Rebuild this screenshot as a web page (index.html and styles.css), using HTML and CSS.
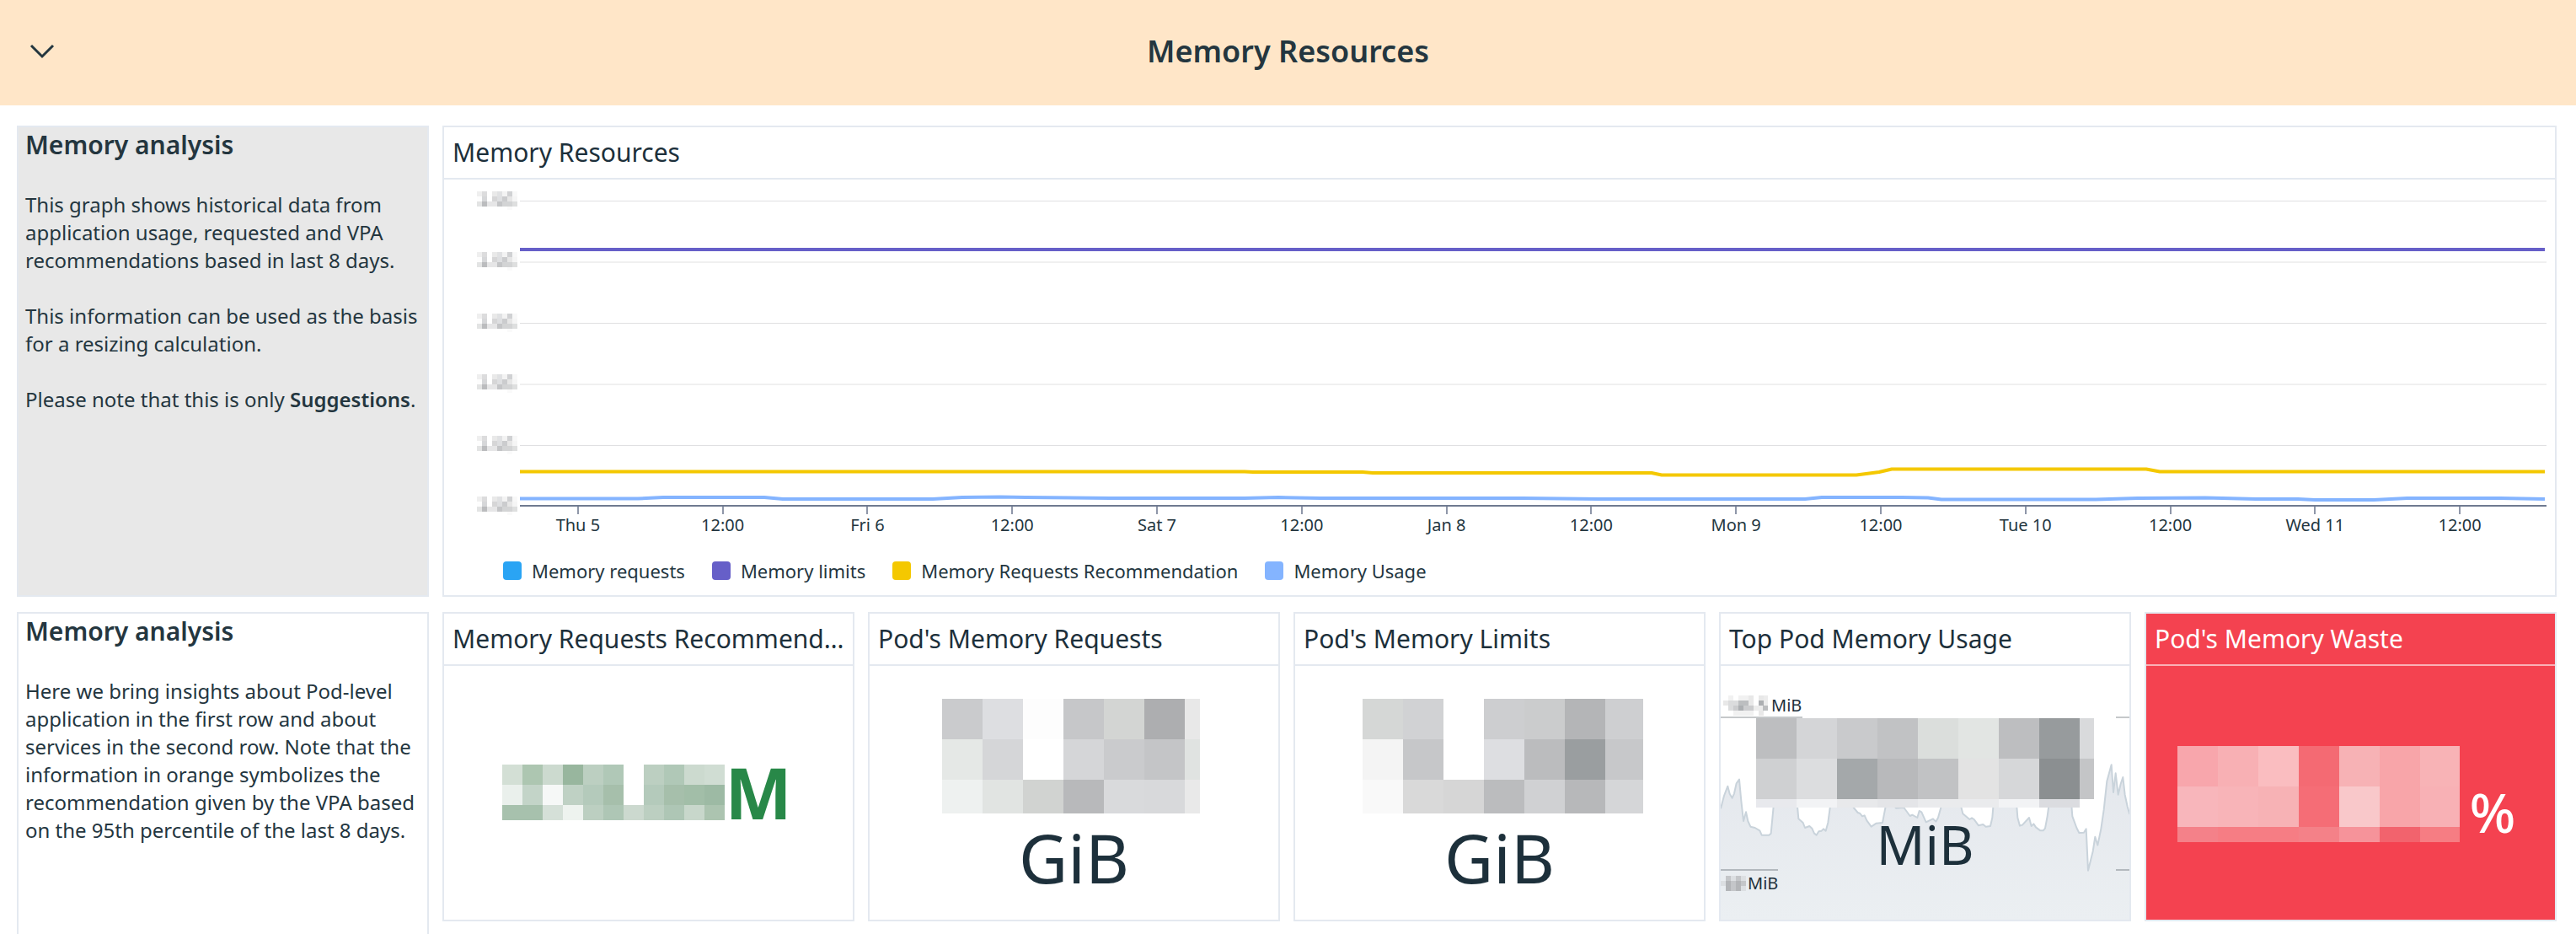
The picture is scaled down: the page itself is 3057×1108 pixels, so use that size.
FILE: index.html
```html
<!DOCTYPE html>
<html lang="en">
<head>
<meta charset="utf-8">
<title>Memory Resources</title>
<link rel="stylesheet" href="styles.css">
</head>
<body>
<svg class="defs" aria-hidden="true">
  <symbol id="tick-value" viewBox="0 0 48 22">
    <g shape-rendering="crispEdges">
      <path fill="#efefef" d="M0 0h6v6h-6z"/><path fill="#dcdcdd" d="M6 0h6v6h-6z"/><path fill="#e9e9e9" d="M18 0h6v6h-6z"/><path fill="#e0e1e3" d="M24 0h6v6h-6z"/><path fill="#f3f3f3" d="M30 0h6v6h-6z"/><path fill="#d0d1d3" d="M36 0h6v6h-6z"/><path fill="#f8f8f8" d="M42 0h6v6h-6z"/>
      <path fill="#fdfdfd" d="M0 6h6v6h-6z"/><path fill="#d6d7d9" d="M6 6h6v6h-6z"/><path fill="#d6d6d7" d="M18 6h6v6h-6z"/><path fill="#dedfe1" d="M24 6h6v6h-6z"/><path fill="#cbccce" d="M30 6h6v6h-6z"/><path fill="#e6e6e6" d="M36 6h6v6h-6z"/><path fill="#f5f5f5" d="M42 6h6v6h-6z"/>
      <path fill="#e3e4e4" d="M0 12h6v6h-6z"/><path fill="#bbbcbe" d="M6 12h6v6h-6z"/><path fill="#e6e6e7" d="M12 12h12v6h-12z"/><path fill="#c4c5c7" d="M24 12h6v6h-6z"/><path fill="#d3d4d5" d="M30 12h12v6h-12z"/><path fill="#dedfdf" d="M42 12h6v6h-6z"/>
      <path fill="#fafafa" d="M36 18h6v4h-6z"/>
    </g>
  </symbol>
</svg>

<header class="group-header">
  <button class="toggle" type="button" aria-label="Collapse group">
    <svg width="30" height="18" viewBox="0 0 30 18" fill="none" stroke="#24363f" stroke-width="3"><path d="M2 2l13 13L28 2"/></svg>
  </button>
  <h1>Memory Resources</h1>
</header>

<main class="board">
  <section class="card note note-grey">
    <h2>Memory analysis</h2>
    <p>This graph shows historical data from application usage, requested and VPA recommendations based in last 8 days.</p>
    <p>This information can be used as the basis for a resizing calculation.</p>
    <p>Please note that this is only <strong>Suggestions</strong>.</p>
  </section>

  <section class="card graph">
    <h3>Memory Resources</h3>
    <div class="chart">
      <div class="y-axis">
        <svg><use href="#tick-value"/></svg>
        <svg><use href="#tick-value"/></svg>
        <svg><use href="#tick-value"/></svg>
        <svg><use href="#tick-value"/></svg>
        <svg><use href="#tick-value"/></svg>
        <svg><use href="#tick-value"/></svg>
      </div>
      <div class="plot">
        <svg class="lines" viewBox="0 0 2405 388" preserveAspectRatio="none" fill="none">
          <g shape-rendering="crispEdges">
            <path fill="#e0e0e2" d="M0 25h2405v1H0zM0 170h2405v1H0zM0 315h2405v1H0z"/>
            <path fill="#f0f0f0" d="M0 97h2405v2H0zM0 242h2405v2H0z"/>
            <path fill="#6f7a90" d="M0 386h2405v2H0z"/>
          </g>
          <g stroke-width="4" stroke-linejoin="round">
            <path stroke="#84b4ff" d="M0 378.500H140L170 377H290L312 379H490L525 377L570 376.500L600 377L700 378H860L900 377L950 378H1110L1190 378L1280 379H1525L1545 377L1640 377L1671 377.500L1687 379.500H1870L1920 378L2000 377.500L2060 379H2110L2130 380H2200L2240 378H2350L2403 379"/>
            <path stroke="#f4c800" d="M0 346.500H860L870 347H1000L1012 348H1343L1355 350.500H1586L1613 347L1628 343.500H1930L1946 346.500H2403"/>
            <path stroke="#665fc8" d="M0 83H2403"/>
          </g>
        </svg>
        <ol class="x-axis">
          <li>Thu 5</li><li>12:00</li><li>Fri 6</li><li>12:00</li><li>Sat 7</li><li>12:00</li><li>Jan 8</li><li>12:00</li><li>Mon 9</li><li>12:00</li><li>Tue 10</li><li>12:00</li><li>Wed 11</li><li>12:00</li>
        </ol>
      </div>
    </div>
    <ul class="legend">
      <li class="requests">Memory requests</li>
      <li class="limits">Memory limits</li>
      <li class="recommendation">Memory Requests Recommendation</li>
      <li class="usage">Memory Usage</li>
    </ul>
  </section>

  <section class="card note note-tall">
    <h2>Memory analysis</h2>
    <p>Here we bring insights about Pod-level application in the first row and about services in the second row. Note that the information in orange symbolizes the recommendation given by the VPA based on the 95th percentile of the last 8 days.</p>
  </section>

  <section class="card">
    <h3>Memory Requests Recommendation</h3>
    <div class="value value-row value-green">
      <svg width="264" height="66" viewBox="0 0 264 66" shape-rendering="crispEdges">
        <path fill="#d3dfd5" d="M0 0h24v24H0z"/><path fill="#adc6b1" d="M24 0h24v24h-24z"/><path fill="#ccdacf" d="M48 0h24v24h-24z"/><path fill="#98b69e" d="M72 0h24v24h-24z"/><path fill="#bccfc1" d="M96 0h24v24h-24z"/><path fill="#b0c8b7" d="M120 0h24v24h-24z"/><path fill="#bccfc1" d="M168 0h24v24h-24z"/><path fill="#b0c8b7" d="M192 0h24v24h-24z"/><path fill="#ccdacf" d="M216 0h24v24h-24z"/><path fill="#d0ddd3" d="M240 0h24v24h-24z"/>
        <path fill="#eaf0ec" d="M0 24h24v24H0z"/><path fill="#c3d4c8" d="M24 24h24v24h-24z"/><path fill="#f6f8f7" d="M48 24h24v24h-24z"/><path fill="#bfd1c4" d="M72 24h24v24h-24z"/><path fill="#b4cabb" d="M96 24h24v24h-24z"/><path fill="#a6bfab" d="M120 24h24v24h-24z"/><path fill="#b4cabb" d="M168 24h24v24h-24z"/><path fill="#a6bfab" d="M192 24h24v24h-24z"/><path fill="#a2bea8" d="M216 24h24v24h-24z"/><path fill="#9dbaa4" d="M240 24h24v24h-24z"/>
        <path fill="#a7c1ad" d="M0 48h48v18H0z"/><path fill="#d5e0d8" d="M48 48h24v18h-24z"/><path fill="#eef3ef" d="M72 48h24v18h-24z"/><path fill="#bccfc1" d="M96 48h24v18h-24z"/><path fill="#aec6b5" d="M120 48h24v18h-24z"/><path fill="#ccd9cf" d="M144 48h24v18h-24z"/><path fill="#bccfc1" d="M168 48h24v18h-24z"/><path fill="#aec6b5" d="M192 48h24v18h-24z"/><path fill="#c8d7cb" d="M216 48h24v18h-24z"/><path fill="#acc4b0" d="M240 48h24v18h-24z"/>
      </svg>
      <span>M</span>
    </div>
  </section>

  <section class="card">
    <h3>Pod's Memory Requests</h3>
    <div class="value value-large">
      <svg width="314" height="136" viewBox="0 0 314 136" shape-rendering="crispEdges">
        <path fill="#cacbcd" d="M0 0h48v48H0z"/><path fill="#dddee1" d="M48 0h48v48H48z"/><path fill="#fdfdfd" d="M96 0h48v48H96z"/><path fill="#c6c7c9" d="M144 0h48v48h-48z"/><path fill="#d3d5d3" d="M192 0h48v48h-48z"/><path fill="#adaeb0" d="M240 0h48v48h-48z"/><path fill="#e8e8e8" d="M288 0h18v48h-18z"/>
        <path fill="#e5e8e6" d="M0 48h48v48H0z"/><path fill="#d5d6d8" d="M48 48h48v48H48z"/><path fill="#d5d6d8" d="M144 48h48v48h-48z"/><path fill="#cacbcd" d="M192 48h48v48h-48z"/><path fill="#c4c5c7" d="M240 48h48v48h-48z"/><path fill="#e0e3e1" d="M288 48h18v48h-18z"/>
        <path fill="#eef1f0" d="M0 96h48v40H0z"/><path fill="#e1e4e2" d="M48 96h48v40H48z"/><path fill="#d1d3d1" d="M96 96h48v40H96z"/><path fill="#b8b9bb" d="M144 96h48v40h-48z"/><path fill="#d9dadc" d="M192 96h48v40h-48z"/><path fill="#d8d9db" d="M240 96h48v40h-48z"/><path fill="#e9e9e9" d="M288 96h18v40h-18z"/>
      </svg>
      <span>GiB</span>
    </div>
  </section>

  <section class="card">
    <h3>Pod's Memory Limits</h3>
    <div class="value value-large">
      <svg width="341" height="136" viewBox="-8 0 341 136" shape-rendering="crispEdges">
        <path fill="#d5d7d6" d="M0 0h48v48H0z"/><path fill="#d1d2d4" d="M48 0h48v48H48z"/><path fill="#cdced0" d="M144 0h48v48h-48z"/><path fill="#cbcccd" d="M192 0h48v48h-48z"/><path fill="#b4b5b7" d="M240 0h48v48h-48z"/><path fill="#cecfd1" d="M288 0h45v48h-45z"/>
        <path fill="#f4f4f4" d="M0 48h48v48H0z"/><path fill="#c6c7c9" d="M48 48h48v48H48z"/><path fill="#dddee1" d="M144 48h48v48h-48z"/><path fill="#bbbcbe" d="M192 48h48v48h-48z"/><path fill="#9a9ea0" d="M240 48h48v48h-48z"/><path fill="#c7c8ca" d="M288 48h45v48h-45z"/>
        <path fill="#f9f9f9" d="M0 96h48v40H0z"/><path fill="#d9d9d9" d="M48 96h48v40H48z"/><path fill="#d6d6d6" d="M96 96h48v40H96z"/><path fill="#bbbcbe" d="M144 96h48v40h-48z"/><path fill="#d0d1d3" d="M192 96h48v40h-48z"/><path fill="#b7b8ba" d="M240 96h48v40h-48z"/><path fill="#d5d6d8" d="M288 96h45v40h-45z"/>
      </svg>
      <span>GiB</span>
    </div>
  </section>

  <section class="card">
    <h3>Top Pod Memory Usage</h3>
    <div class="value value-medium">
      <svg class="sparkline" viewBox="36 210 1455 903" preserveAspectRatio="none">
        <defs><linearGradient id="area" x1="0" y1="0" x2="0" y2="1"><stop offset="0" stop-color="#e2e5eb"/><stop offset="1" stop-color="#ebeff2"/></linearGradient></defs>
        <path fill="url(#area)" d="M36 718L48 672L61 638L68 665L77 680L84 664L92 628L102 614L109 690L117 762L126 730L133 762L142 782L158 786L175 796L182 812L208 812L215 806L225 700L240 600H300L309 710L313 754L329 768L336 786L352 780L361 788L369 806L377 812L385 799L395 797L402 790L410 797L418 768L427 700L440 640H490L509 714L524 732L532 735L540 745L548 742L556 760L572 782L590 770L612 768L625 700L640 690L660 716L688 714L710 744L718 740L736 750L743 726L751 730L767 766L792 754L802 764L810 750L821 710L830 640H880L892 712L898 736L922 756L930 751L938 756L954 778L970 774L980 782L996 780L1003 750L1007 700L1020 600H1080L1090 712L1093 750L1101 779L1110 776L1134 750L1142 780L1150 772L1158 784L1174 796L1184 796L1191 788L1199 745L1205 700L1230 400L1280 640L1288 745L1303 786L1312 804L1329 803L1337 790L1344 938L1361 870L1369 818L1378 848L1390 790L1400 722L1411 620L1427 562L1434 660L1442 592L1451 668L1460 630L1468 606L1475 668L1484 710L1492 738V1113H36z"/>
        <path fill="none" stroke="#c9d3db" stroke-width="6" stroke-linejoin="round" d="M36 718L48 672L61 638L68 665L77 680L84 664L92 628L102 614L109 690L117 762L126 730L133 762L142 782L158 786L175 796L182 812L208 812L215 806L225 700L240 600H300L309 710L313 754L329 768L336 786L352 780L361 788L369 806L377 812L385 799L395 797L402 790L410 797L418 768L427 700L440 640H490L509 714L524 732L532 735L540 745L548 742L556 760L572 782L590 770L612 768L625 700L640 690L660 716L688 714L710 744L718 740L736 750L743 726L751 730L767 766L792 754L802 764L810 750L821 710L830 640H880L892 712L898 736L922 756L930 751L938 756L954 778L970 774L980 782L996 780L1003 750L1007 700L1020 600H1080L1090 712L1093 750L1101 779L1110 776L1134 750L1142 780L1150 772L1158 784L1174 796L1184 796L1191 788L1199 745L1205 700L1230 400L1280 640L1288 745L1303 786L1312 804L1329 803L1337 790L1344 938L1361 870L1369 818L1378 848L1390 790L1400 722L1411 620L1427 562L1434 660L1442 592L1451 668L1460 630L1468 606L1475 668L1484 710L1492 738"/>
        <path fill="#c5c8ca" d="M36 390h291v6H36zM1443 390h48v6h-48z"/>
        <path fill="#b3b9be" d="M36 933h204v6H36zM1443 933h48v6h-48z"/>
      </svg>
      <div class="bound bound-max">
        <svg width="53" height="24" viewBox="0 0 53 24" shape-rendering="crispEdges">
          <path fill="#f1f1f1" d="M6 0h6v6H6zM18 0h12v6H18zM12 18h24v6H12z"/><path fill="#e8e8e8" d="M0 6h6v6H0zM30 0h6v12h-6zM42 0h6v6h-6zM42 18h6v6h-6z"/><path fill="#dbdcdd" d="M6 6h12v6H6zM6 12h6v6H6z"/><path fill="#cbccce" d="M12 12h6v6h-6zM24 12h12v6H24z"/><path fill="#bcbec0" d="M18 6h12v6H18zM47 12h6v6h-6z"/><path fill="#acafb2" d="M18 12h6v6h-6zM42 6h6v6h-6z"/><path fill="#ececec" d="M36 12h11v6H36zM48 0h5v12h-5z"/>
        </svg>
        <span>MiB</span>
      </div>
      <div class="bound bound-min">
        <svg width="30" height="18" viewBox="0 0 30 18" shape-rendering="crispEdges">
          <path fill="#dcdfe2" d="M0 6h6v6H0zM12 0h6v6h-6zM24 0h6v6h-6zM24 12h6v6h-6z"/><path fill="#c4c6c9" d="M6 0h6v6H6zM12 6h6v6h-6zM18 0h6v6h-6zM24 6h6v6h-6zM12 12h6v6h-6z"/><path fill="#b3b5b8" d="M6 6h6v12H6zM18 6h6v12h-6z"/>
        </svg>
        <span>MiB</span>
      </div>
      <svg class="main-value" width="401" height="106" viewBox="0 0 401 106" shape-rendering="crispEdges">
        <path fill="#bdbec0" d="M0 0h48v48H0z"/><path fill="#d4d5d7" d="M48 0h48v48H48z"/><path fill="#c9cacc" d="M96 0h48v48H96z"/><path fill="#c1c2c4" d="M144 0h48v48h-48z"/><path fill="#dbdedc" d="M192 0h48v48h-48z"/><path fill="#e2e5e3" d="M240 0h48v48h-48z"/><path fill="#bdbec0" d="M288 0h48v48h-48z"/><path fill="#979b9d" d="M336 0h48v48h-48z"/><path fill="#d9dadc" d="M384 0h17v48h-17z"/>
        <path fill="#cfd0d2" d="M0 48h48v48H0z"/><path fill="#dcdddf" d="M48 48h48v48H48z"/><path fill="#a4a8aa" d="M96 48h48v48H96z"/><path fill="#b8b9bb" d="M144 48h48v48h-48z"/><path fill="#c1c2c4" d="M192 48h48v48h-48z"/><path fill="#e3e3e3" d="M240 48h48v48h-48z"/><path fill="#d6d7d9" d="M288 48h48v48h-48z"/><path fill="#8b8f91" d="M336 48h48v48h-48z"/><path fill="#c4c5c7" d="M384 48h17v48h-17z"/>
        <path fill="#e8e9ed" d="M0 96h48v10H0z"/><path fill="#f2f3f5" d="M48 96h48v10H48z"/><path fill="#e8e9eb" d="M96 96h48v10H96z"/><path fill="#e4e5e8" d="M144 96h48v10h-48z"/><path fill="#eaebed" d="M192 96h96v10h-96z"/><path fill="#f2f3f5" d="M288 96h48v10h-48z"/><path fill="#dbdce0" d="M336 96h48v10h-48z"/>
      </svg>
      <span class="main-value">MiB</span>
    </div>
  </section>

  <section class="card card-alert">
    <h3>Pod's Memory Waste</h3>
    <div class="value value-row value-percent">
      <svg width="335" height="114" viewBox="0 0 335 114" shape-rendering="crispEdges">
        <path fill="#f8a6ac" d="M0 0h48v48H0z"/><path fill="#f8b0b4" d="M48 0h48v48H48z"/><path fill="#fabdc0" d="M96 0h48v48H96z"/><path fill="#f46a73" d="M144 0h48v48h-48z"/><path fill="#f7b2b5" d="M192 0h48v48h-48z"/><path fill="#f8a5a9" d="M240 0h48v48h-48z"/><path fill="#f8b3b6" d="M288 0h47v48h-47z"/>
        <path fill="#f8b6bb" d="M0 48h48v48H0z"/><path fill="#f8b4b8" d="M48 48h48v48H48z"/><path fill="#f7b2b5" d="M96 48h48v48H96z"/><path fill="#f56d76" d="M144 48h48v48h-48z"/><path fill="#f9c8ca" d="M192 48h48v48h-48z"/><path fill="#f8a5a9" d="M240 48h48v48h-48z"/><path fill="#f8b1b5" d="M288 48h47v48h-47z"/>
        <path fill="#f48189" d="M0 96h48v18H0z"/><path fill="#f67d84" d="M48 96h96v18H48z"/><path fill="#f48188" d="M144 96h48v18h-48z"/><path fill="#f6939a" d="M192 96h48v18h-48z"/><path fill="#f2636d" d="M240 96h48v18h-48z"/><path fill="#f67d83" d="M288 96h47v18h-47z"/>
      </svg>
      <span>%</span>
    </div>
  </section>
</main>
</body>
</html>
```
FILE: styles.css
```css
:root {
  --ink: #24363f;
  --ink-strong: #1d303b;
  --line: #e4e9f0;
}

* { box-sizing: border-box; }

body {
  margin: 0;
  height: 100vh;
  overflow: hidden;
  background: #fff;
  color: var(--ink);
  font-family: "Noto Sans", sans-serif;
  font-size: 24px;
  line-height: 33px;
}

h1, h2, h3, p, ul, ol { margin: 0; padding: 0; }
ul, ol { list-style: none; }
svg { display: block; flex: none; }

.defs { position: absolute; width: 0; height: 0; }

.group-header {
  display: grid;
  grid-template-columns: 1fr auto 1fr;
  align-items: center;
  height: 125px;
  padding: 0 35px 3px;
  background: #ffe6c8;
}

.group-header h1 { font-size: 36px; font-weight: 600; line-height: 48px; }

.toggle {
  justify-self: start;
  padding: 0;
  border: 0;
  background: none;
  cursor: pointer;
}

.board {
  display: grid;
  grid-template-columns: repeat(6, minmax(0, 1fr));
  grid-template-rows: 559px 367px 367px;
  gap: 18px 16px;
  padding: 24px 23px 24px 20px;
}

.card {
  display: flex;
  flex-direction: column;
  min-width: 0;
  border: 2px solid var(--line);
  background: #fff;
}

.card h3 {
  flex: none;
  padding: 0 10px;
  border-bottom: 2px solid var(--line);
  overflow: hidden;
  color: var(--ink-strong);
  font-size: 30px;
  font-weight: 400;
  line-height: 60px;
  text-overflow: ellipsis;
  white-space: nowrap;
}

.graph { grid-column: 2 / -1; }
.note-tall { grid-row: 2 / 4; }

.note { gap: 33px; padding: 0 8px; }
.note h2 { font-size: 30px; font-weight: 600; line-height: 42px; }
.note strong { font-weight: 600; }
.note-grey { background: #e8e8e8; }

.chart { display: flex; padding: 0 10px 0 39px; }

.y-axis {
  display: flex;
  flex-direction: column;
  justify-content: space-between;
  width: 51px;
  height: 398px;
  padding-top: 14px;
}

.y-axis svg { width: 48px; height: 22px; }

.plot { flex: 1; min-width: 0; }
.lines { width: 100%; height: 388px; }

.x-axis {
  display: grid;
  grid-template-columns: repeat(14, 1fr);
  margin: 0 17px 0 -17px;
  font-size: 20px;
  line-height: 26px;
  text-align: center;
}

.x-axis li::before {
  content: "";
  display: block;
  width: 2px;
  height: 9px;
  margin: 0 auto;
  background: #8f97a9;
}

.legend {
  display: flex;
  gap: 32px;
  padding: 26px 70px 0;
  font-size: 22px;
  line-height: 30px;
}

.legend li { display: flex; align-items: center; gap: 12px; }

.legend li::before {
  content: "";
  width: 22px;
  height: 22px;
  border-radius: 4px;
}

.requests::before { background: #2aa4f4; }
.limits::before { background: #665fc8; }
.recommendation::before { background: #f4c800; }
.usage::before { background: #84b4ff; }

.value {
  position: relative;
  display: flex;
  flex: 1;
  flex-direction: column;
  align-items: center;
  justify-content: center;
  color: var(--ink-strong);
}

.value-row { flex-direction: row; }
.value-green { padding: 0 3px 2px 0; color: #288848; }
.value-green span { font-size: 84px; font-weight: 700; line-height: 84px; }
.value-large { gap: 12px; padding-top: 4px; font-size: 80px; line-height: 80px; }
.value-medium { gap: 12px; padding-top: 4px; font-size: 64px; line-height: 64px; }
.value-percent { gap: 12px; align-items: flex-end; padding: 0 10px 92px 0; color: #fff; }
.value-percent span { font-size: 64px; font-weight: 500; line-height: 70px; }

.sparkline { position: absolute; inset: 0; width: 100%; height: 100%; }
.main-value { position: relative; }

.bound {
  position: absolute;
  left: 0;
  display: flex;
  align-items: center;
  font-size: 20px;
  line-height: 24px;
}

.bound-max { top: 35px; gap: 4px; padding-left: 3px; }
.bound-min { top: 246px; gap: 2px; }

.card-alert { background: #f44250; }
.card-alert h3 { border-color: #fab0b6; color: #fff; }
```
